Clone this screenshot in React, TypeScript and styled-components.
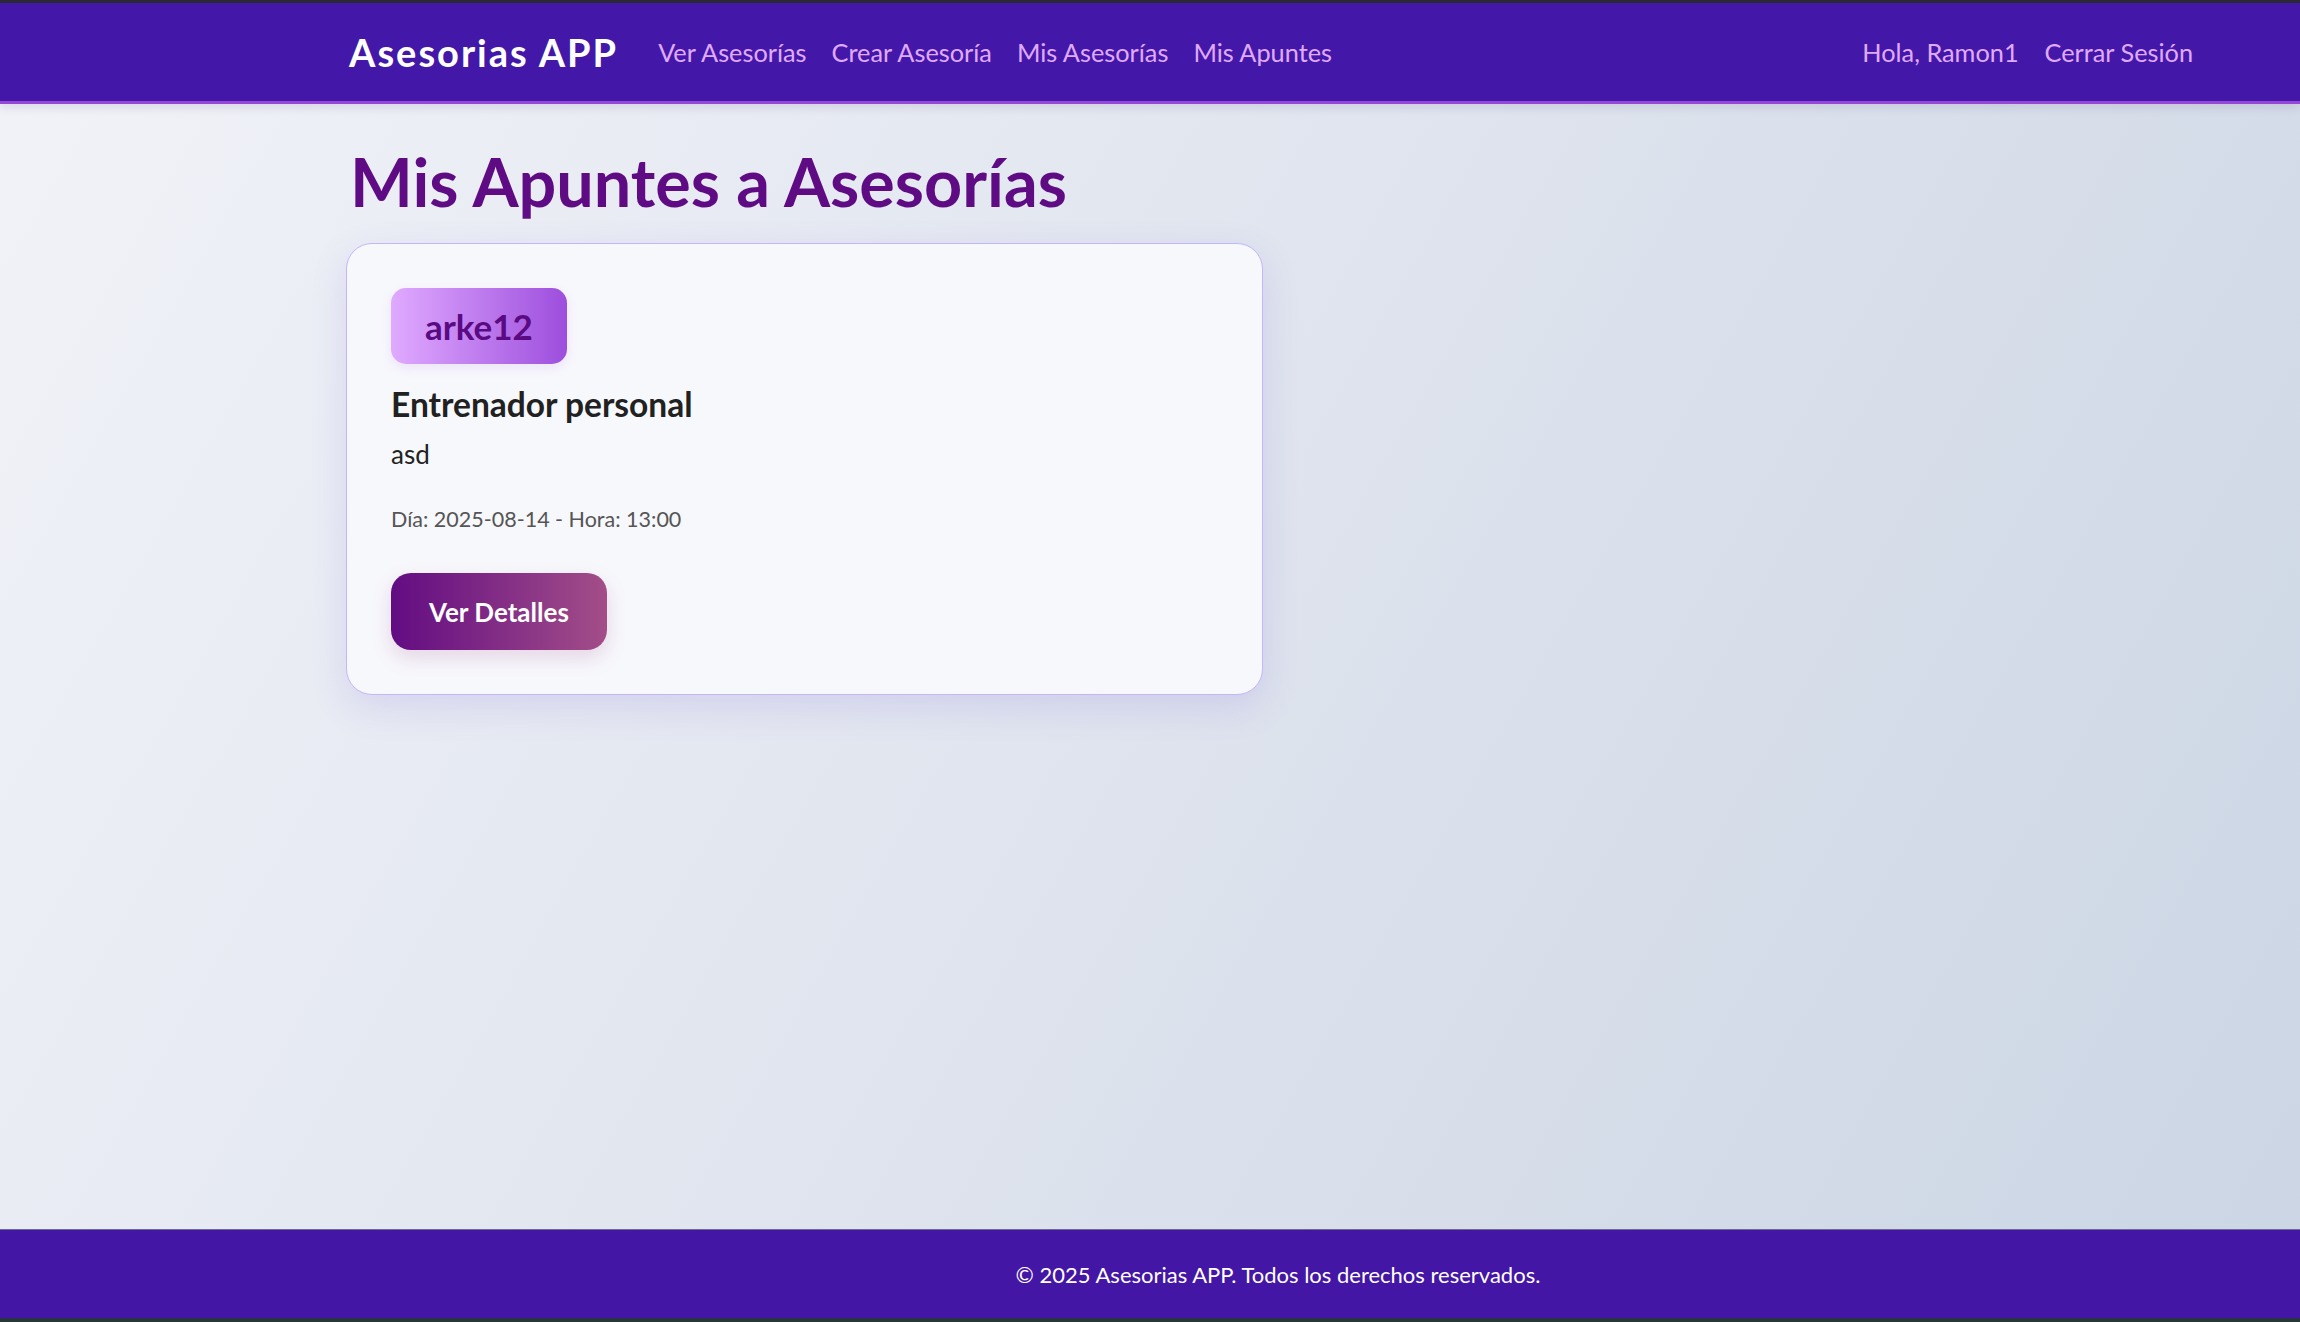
import React from "react";
import styled, { createGlobalStyle } from "styled-components";

const GlobalStyle = createGlobalStyle`
  html, body {
    margin: 0;
    padding: 0;
  }
  body {
    font-family: Lato, "Open Sans", Arial, sans-serif;
    background: #2b2a33;
  }
  * { box-sizing: border-box; }
`;

const Page = styled.div`
  height: 1322px;
  display: flex;
  flex-direction: column;
  background: linear-gradient(120deg, #f1f3f8 0%, #e3e7f0 40%, #cbd5e4 100%);
`;

const ChromeStrip = styled.div<{ $h: number; $bg: string }>`
  height: ${(p) => p.$h}px;
  flex-shrink: 0;
  background: ${(p) => p.$bg};
`;

const Navbar = styled.nav`
  height: 101px;
  flex-shrink: 0;
  display: flex;
  align-items: center;
  justify-content: space-between;
  padding: 0 107px 0 349px;
  background: #4318a8;
  border-bottom: 3px solid #9647d8;
  box-shadow: 0 3px 10px rgba(40, 20, 90, 0.12);
  position: relative;
  z-index: 1;
`;

const NavGroup = styled.div<{ $gap: number }>`
  display: flex;
  align-items: center;
  gap: ${(p) => p.$gap}px;
`;

const Brand = styled.a`
  font-size: 38px;
  font-weight: 700;
  color: #ffffff;
  letter-spacing: 2px;
  text-decoration: none;
  margin-right: 15px;
`;

const NavLink = styled.a`
  font-size: 25.3px;
  font-weight: 400;
  color: #e0aaff;
  text-decoration: none;
  cursor: pointer;
`;

const Main = styled.main`
  flex: 1;
  padding: 0 0 0 346px;
`;

const Title = styled.h1`
  margin: 38px 0 0 4px;
  font-size: 66.5px;
  line-height: 1.2;
  font-weight: 700;
  color: #5e0b84;
`;

const Card = styled.div`
  margin-top: 21px;
  width: 917px;
  height: 452px;
  padding: 44px 44px;
  background: #f7f8fc;
  border: 1px solid #c3b6fb;
  border-radius: 26px;
  box-shadow: 0 12px 36px rgba(120, 90, 220, 0.16);
  display: flex;
  flex-direction: column;
  align-items: flex-start;
`;

const Badge = styled.div`
  height: 78px;
  padding: 0 34px;
  display: flex;
  align-items: center;
  border-radius: 15px;
  background: linear-gradient(90deg, #e0aaff 0%, #9d4edd 100%);
  color: #5a0a82;
  font-size: 35px;
  font-weight: 700;
  box-shadow: 0 4px 12px rgba(157, 78, 221, 0.12);
`;

const CardTitle = styled.h2`
  margin: 20px 0 0;
  font-size: 33.5px;
  font-weight: 700;
  color: #212121;
`;

const CardText = styled.p`
  margin: 14px 0 0;
  font-size: 26px;
  color: #222;
`;

const CardMeta = styled.p`
  margin: 36px 0 0;
  font-size: 21.5px;
  color: #555;
`;

const Button = styled.button`
  margin-top: 41px;
  height: 78px;
  padding: 0 38px;
  border: none;
  border-radius: 20px;
  background: linear-gradient(90deg, #620c83 0%, #a34e88 100%);
  color: #fff;
  font-family: inherit;
  font-size: 26px;
  font-weight: 700;
  box-shadow: 0 8px 20px rgba(150, 60, 120, 0.18);
  cursor: pointer;
`;

const Footer = styled.footer`
  height: 89px;
  flex-shrink: 0;
  display: flex;
  align-items: center;
  justify-content: center;
  padding-left: 256px;
  background: #4316a6;
  border-top: 1px solid #6d6a8e;
  color: #ffffff;
  font-size: 22px;
`;

export default function App() {
  return (
    <>
      <GlobalStyle />
      <Page>
        <ChromeStrip $h={3} $bg="#2b2a33" />
        <Navbar>
          <NavGroup $gap={25}>
            <Brand>Asesorias APP</Brand>
            <NavLink>Ver Asesorías</NavLink>
            <NavLink>Crear Asesoría</NavLink>
            <NavLink>Mis Asesorías</NavLink>
            <NavLink>Mis Apuntes</NavLink>
          </NavGroup>
          <NavGroup $gap={26}>
            <NavLink>Hola, Ramon1</NavLink>
            <NavLink>Cerrar Sesión</NavLink>
          </NavGroup>
        </Navbar>
        <Main>
          <Title>Mis Apuntes a Asesorías</Title>
          <Card>
            <Badge>arke12</Badge>
            <CardTitle>Entrenador personal</CardTitle>
            <CardText>asd</CardText>
            <CardMeta>Día: 2025-08-14 - Hora: 13:00</CardMeta>
            <Button>Ver Detalles</Button>
          </Card>
        </Main>
        <Footer>© 2025 Asesorias APP. Todos los derechos reservados.</Footer>
        <ChromeStrip $h={4} $bg="#26363a" />
      </Page>
    </>
  );
}
